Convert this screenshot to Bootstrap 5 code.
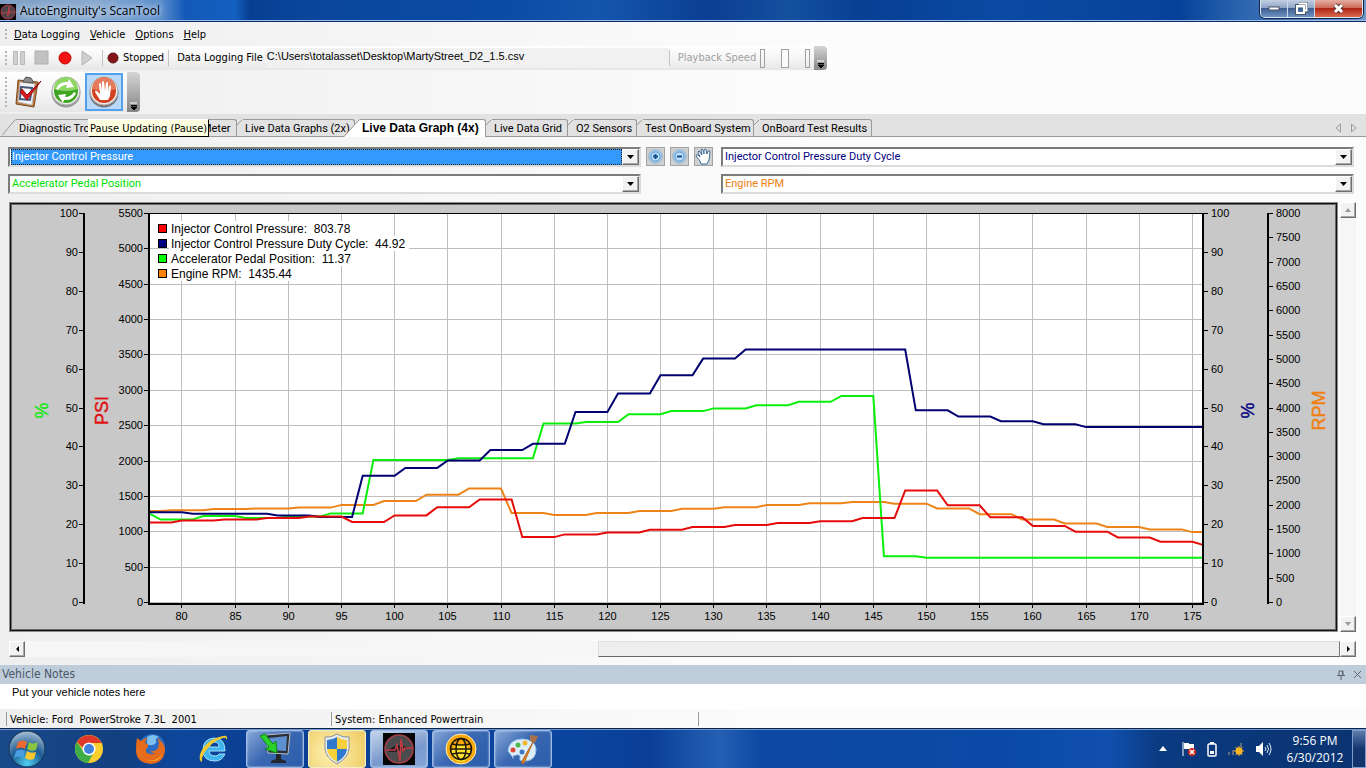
<!DOCTYPE html>
<html lang="en">
<head>
<meta charset="utf-8">
<meta name="viewport" content="width=device-width, initial-scale=1">
<title>AutoEnginuity's ScanTool</title>
<link rel="stylesheet" href="https://cdn.jsdelivr.net/npm/bootstrap@5.3.0/dist/css/bootstrap.min.css">
<style>
  :root { --ui: "DejaVu Sans Condensed", "Noto Sans", sans-serif; --sans: "Liberation Sans", Arial, sans-serif; --narrow: Roboto, "Liberation Sans", sans-serif; --segoe: "Open Sans", "Noto Sans", sans-serif; }
  body { font: 11px/16px var(--ui); color: #000; background: linear-gradient(90deg, #efefef, #fcfcfc 60%); }
  button { font: inherit; color: inherit; padding: 0; border: 0; background: none; }
  svg { display: block; flex: none; }

  /* window caption */
  .caption { height: 22px; background: linear-gradient(90deg, #7f9fc4 0, #89a9d0 100px, #5d8fce 160px, #1459b8 185px, #1260c0 235px, #083f92 250px, #0a479c 320px, #0a4ba6 500px, #1455ad 600px, #0b3f92 710px, #15509f 790px, #083f93 860px, #0a4aa4 1000px, #07429a 1180px, #2a64ae 1240px, #6f97c8 100%); border-bottom: 1px solid #0b2a66; box-shadow: inset 0 -1px #9dbce6; font: 12px/21px var(--segoe); }
  .caption h1 { font: inherit; text-shadow: 0 0 6px #d5e4f6, 0 0 6px #d5e4f6; }
  .wbtns { height: 18px; margin-right: 3px; border: 1px solid #dbe6f4; border-top: 0; border-radius: 0 0 5px 5px; overflow: hidden; box-shadow: 0 0 0 1px #12264c; }
  .wbtns button { width: 27px; background: linear-gradient(#c3d0e3, #8fa5c6 45%, #3f5f92 50%, #6d92c4); border-right: 1px solid #c9d7ea; display: grid; place-items: center; }
  .wbtns .x-close { width: 47px; border: 0; background: linear-gradient(#e5b0a4, #cd6b5a 45%, #b02416 50%, #d96c4e); }

  /* menu and tool bars */
  .menus { height: 24px; padding-top: 1px; }
  .menus .grip { height: 12px; margin-right: 7px; }
  .menus button { margin-right: 10px; }
  .grip { width: 2px; margin-left: 5px; background: repeating-linear-gradient(#b5b5b5 0 2px, transparent 2px 4px); }
  .strip { background: linear-gradient(#fff, #f3f3f3 60%, #e6e6e6); border-radius: 0 3px 3px 0; width: max-content; }
  .bar-a { height: 24px; }
  .bar-a .grip { height: 15px; margin-right: 5px; }
  .bar-a .ctl { gap: 8px; }
  .sep { width: 1px; height: 16px; background: #c3c3c3; }
  .file-box { height: 20px; width: 402px; background: #f1f1f1; font: 11px/16px var(--sans); }
  .more { width: 13px; align-self: stretch; background: linear-gradient(#d5d5d5, #858585); border-radius: 0 4px 4px 0; display: flex; align-items: end; justify-content: center; padding-bottom: 2px; }
  .bar-b { height: 40px; margin: 2px 0; }
  .bar-b .grip { height: 31px; margin-right: 2px; }
  .tool { width: 38px; height: 38px; display: grid; place-items: center; }
  .tool.hot { border: 2px solid #55a0ea; background: #b9d9f8; }
  .stopend { width: 5px; height: 19px; border: 1px solid #a0a0a0; }
  .speed { appearance: none; width: 40px; height: 19px; background: none; margin: 0; }
  .speed::-webkit-slider-thumb { appearance: none; width: 8px; height: 19px; border: 1px solid #a0a0a0; background: #fafafa; }
  .tip { position: absolute; left: 3px; top: 46px; z-index: 5; height: 18px; padding: 0 1px; line-height: 17px; background: #ffffe1; border: 1px solid #fff; border-right-color: #000; border-bottom-color: #000; white-space: nowrap; min-width: 121px; }

  /* tabs */
  .tabstrip { height: 23px; background: #e2e2e2; border-bottom: 1px solid #9a9a9a; font-family: var(--narrow); padding: 5px 0 0 2px; }
  .tabstrip button.tb { height: 17px; display: flex; white-space: nowrap; line-height: 18px; }
  .tb .face { border-top: 1px solid #9a9a9a; border-right: 1px solid #9a9a9a; border-radius: 0 3px 0 0; padding: 0 0 0 2px; flex: 1; height: 17px; line-height: 17px; text-align: left; }
  .tb.on { position: relative; z-index: 2; margin-left: -11px; font: 700 12px var(--sans); }
  .tb.on .face { background: #fff; height: 18px; padding-left: 1px; line-height: 17px; }
  .w-t1 { width: 144px; } .w-t2 { width: 91px; } .w-t3 { width: 118px; } .w-t4 { width: 142px; } .w-t5 { width: 82px; } .w-t6 { width: 69px; } .w-t7 { width: 117px; } .w-t8 { width: 118px; }

  /* parameter pickers */
  .rows { display: flex; flex-direction: column; gap: 7px; padding: 10px 4px 8px 0; }
  .pick { border: 2px solid; border-color: #7c7c7c #dcdcdc #dcdcdc #7c7c7c; background: #fff; height: 20px; flex: 1; display: flex; font: 11px/16px var(--narrow); }
  .pick select { appearance: none; border: 0; padding: 0 0 0 2px; flex: 1; min-width: 0; height: 16px; background: #fff; color: inherit; outline: 0; }
  .pick.sel select { background: #39f; color: #fff; border: 1px dotted #222; line-height: 14px; padding: 0; margin-left: 1px; }
  .raised { width: 17px; flex: none; display: grid; place-items: center; background: #f2f2f2; border: 1px solid; border-color: #fff #6e6e6e #6e6e6e #fff; box-shadow: inset -1px -1px #a8a8a8; }
  .sq { width: 19px; height: 19px; background: #d0d0d0; border: 1px solid #a2a2a2; display: grid; place-items: center; }
  .midgap { width: 80px; flex: none; gap: 5px; padding-left: 5px; }

  /* chart */
  .chartbox { flex: 1; min-width: 0; background: #c8c8c8; border: 1px solid #8c8c8c; box-shadow: inset 0 0 0 1px #111, inset 0 0 0 2px #6a6a6a; }
  .chartbox svg { width: 100%; height: 100%; font: 11px var(--sans); }
  .chartarea { flex: 1; min-height: 320px; gap: 2px; margin: 0 2px 0 1px; }
  .vs { width: 16px; background: #f6f6f6; }
  .vs .raised, .hs .raised { width: 16px; height: 16px; }
  .hs { height: 16px; background: #f6f6f6; margin: 9px 2px 0 1px; }
  .thumb { background: #eee; border: 1px solid; border-color: #e0e0e0 #777 #666 #e0e0e0; }

  /* notes and status */
  .notehead { height: 19px; background: #bfccda; color: #4a5a68; font: 12px/19px var(--ui); padding-left: 2px; }
  .notehead h2 { font: inherit; }
  .notes { height: 25px; border: 0; resize: none; padding: 0 12px; font: 11px/16px var(--sans); overflow: hidden; display: block; outline: 0; }
  .status { height: 19px; padding-left: 6px; }
  .status span { border-left: 1px solid #9a9a9a; height: 14px; padding-left: 3px; line-height: 16px; white-space: pre; }
  .status .stat-a { width: 325px; }
  .status .stat-b { width: 367px; }

  /* taskbar */
  .dock { height: 40px; background: linear-gradient(90deg, #1a4a8c 0, #123f80 120px, #0e479c 180px, #0a3f92 260px, #0b45a0 560px, #0a3f97 650px, #2560b4 720px, #0d48a3 760px, #0a4aa6 1000px, #104fae 1110px, #0a3a80 1160px, #0a3370 100%); border-top: 1px solid #0c2247; box-shadow: inset 0 1px #6f99d0; color: #fff; }
  .dock .pin { width: 62px; height: 38px; display: grid; place-items: center; }
  .dock .orb { width: 58px; padding-right: 4px; }
  .dock .runs { gap: 4px; margin-left: 2px; }
  .dock .run { width: 58px; height: 38px; border: 1px solid #9dbbe4; border-radius: 3px; background: linear-gradient(135deg, #89a9d8, #3a68b2 45%, #2c5ba8); display: grid; place-items: center; box-shadow: inset 0 0 2px #cfe0f5; }
  .dock .run.gold { background: radial-gradient(circle at 40% 60%, #fff2b8, #edc95a); border-color: #fbeeb4; }
  .dock .run.cur { background: linear-gradient(160deg, #c5d4ea, #7798cc 60%, #86a6d6); }
  .tray { gap: 10px; }
  .tray svg { margin: auto; }
  .clock { font: 12px/17px var(--segoe); text-align: center; width: 66px; }
  .peek { width: 14px; height: 38px; border: 1px solid #7f9cc8; background: linear-gradient(#5c7cab, #12356e 50%); }
</style>
</head>
<body class="d-flex flex-column min-vh-100">

<header class="caption d-flex align-items-start">
  <svg class="mt-1" width="16" height="16" viewBox="0 0 32 32"><rect width="32" height="32" fill="#080808"/><circle cx="16" cy="16" r="14" fill="#4a4346" stroke="#b03a42" stroke-width="2"/><path d="M3 18h7l3-4 3 11 2-20 2 15 2-4h7" fill="none" stroke="#b8404a" stroke-width="2"/></svg>
  <h1 class="m-0 ps-1 flex-grow-1">AutoEnginuity's ScanTool</h1>
  <div class="wbtns d-flex">
    <button aria-label="Minimize"><svg width="12" height="5"><rect x="1" y="1" width="10" height="3" fill="#fff" stroke="#4a5566"/></svg></button>
    <button aria-label="Restore"><svg width="13" height="13"><path d="M4 1h8v8h-2M1.500 3.500h8v8h-8z" fill="none" stroke="#4a5566" stroke-width="3"/><path d="M4 1.500h7.500v7H10M2 4h7v7H2z" fill="none" stroke="#fff" stroke-width="2"/></svg></button>
    <button class="x-close" aria-label="Close"><svg width="13" height="11"><path d="M3 2l7 7M10 2L3 9" stroke="#5c3434" stroke-width="5"/><path d="M3 2l7 7M10 2L3 9" stroke="#fff" stroke-width="3"/></svg></button>
  </div>
</header>

<nav class="menus d-flex align-items-center">
  <i class="grip"></i>
  <button><u>D</u>ata Logging</button><button><u>V</u>ehicle</button><button><u>O</u>ptions</button><button><u>H</u>elp</button>
</nav>

<div class="strip bar-a d-flex align-items-center">
  <i class="grip"></i>
  <div class="ctl d-flex me-2">
    <button aria-label="Pause"><svg width="14" height="16"><path d="M1.500 1.500h4v13h-4zM8.500 1.500h4v13h-4z" fill="#cfcfcf" stroke="#b9b9b9"/></svg></button>
    <button aria-label="Stop"><svg width="15" height="16"><rect x="1" y="1" width="13" height="13" fill="#c2c2c2" stroke="#b0b0b0"/></svg></button>
    <button aria-label="Record"><svg width="15" height="16"><circle cx="8" cy="8" r="6" fill="#f21212" stroke="#c40808"/></svg></button>
    <button aria-label="Play"><svg width="14" height="16"><path d="M2 1l10 7-10 7z" fill="#cfcfcf" stroke="#b4b4b4"/></svg></button>
  </div>
  <i class="sep"></i>
  <svg class="ms-1 me-1" width="12" height="12"><circle cx="6" cy="6" r="5" fill="#84161a" stroke="#5d1414"/></svg>
  <span>Stopped</span><i class="sep ms-1 me-2"></i><label for="logfile">Data Logging File</label>
  <output class="file-box ms-1" id="logfile">C:\Users\totalasset\Desktop\MartyStreet_D2_1.5.csv</output>
  <i class="sep me-2"></i><label for="speed" style="color:#a0a0a0">Playback Speed</label>
  <i class="stopend ms-1"></i><input class="speed" type="range" id="speed"><i class="stopend me-1"></i>
  <button class="more" aria-label="Toolbar options"><svg width="7" height="8"><path d="M0 1h7" stroke="#fff"/><path d="M1 3.500h6M1 5h6L4 8z" stroke="#000"/></svg></button>
</div>

<div class="strip bar-b d-flex align-items-center">
  <i class="grip"></i>
  <button class="tool" aria-label="Checklist"><svg width="32" height="34" viewBox="0 0 32 34"><path d="M6 5l20 2-4 25-18-3z" fill="#b9783c" stroke="#7c4a1e"/><path d="M8 7l15 2-3 21-14-3z" fill="#f4f4f8" stroke="#bbb"/><path d="M11 6l3-4 5 1 3 5-11-1z" fill="#8c8c8c" stroke="#555"/><path d="M9 12l11 1-2 12-10-1z" fill="#fff" stroke="#46587c" stroke-width="2"/><path d="M10 14l5 6L29 6 15 25 8 17z" fill="#d8181e" stroke="#9c0e12"/></svg></button>
  <button class="tool" aria-label="Update"><svg width="32" height="32" viewBox="0 0 32 32"><circle cx="16" cy="17" r="14.500" fill="#9a9a9a"/><circle cx="16" cy="15" r="14" fill="#eee" stroke="#aaa"/><circle cx="16" cy="15" r="12" fill="#3fa520"/><path d="M4 13a12 12 0 0 1 24 0q-12 4-24 0z" fill="#8ed662"/><path d="M6 13Q9 5 18 6l1-3 5 8-8 1 1-3q-6 0-9 5zM26 17q-3 8-12 7l-1 3-5-8 8-1-1 3q6 0 9-5z" fill="#fff"/></svg></button>
  <div class="position-relative">
    <button class="tool hot" aria-label="Pause updating" aria-describedby="tip"><svg width="32" height="32" viewBox="0 0 32 32"><circle cx="16" cy="17" r="14.500" fill="#777"/><circle cx="16" cy="15" r="14" fill="#eee" stroke="#aaa"/><circle cx="16" cy="15" r="12" fill="#d2401f"/><path d="M4 13a12 12 0 0 1 24 0q-12 4-24 0z" fill="#e57a5c"/><path d="M12 24l-5-8q0-2 2-1l3 3-1-10q1-2 2 0l1 7V6q1-2 2 0l1 9 1-8q2-2 2 0v9l1-6q2-1 2 0l-1 10-2 4z" fill="#fff"/></svg></button>
    <div class="tip" id="tip" role="tooltip">Pause Updating (Pause)</div>
  </div>
  <button class="more ms-1" aria-label="Toolbar options"><svg width="7" height="8"><path d="M0 1h7" stroke="#fff"/><path d="M1 3.500h6M1 5h6L4 8z" stroke="#000"/></svg></button>
</div>

<div class="tabstrip d-flex">
  <div class="d-flex flex-grow-1" role="tablist">
    <button class="tb w-t1" role="tab"><svg width="15" height="17"><path d="M0 16.500L12 2q2-2 3-1.500" fill="none" stroke="#9a9a9a"/></svg><span class="face">Diagnostic Trouble Codes</span></button>
    <button class="tb w-t2" role="tab"><svg width="6" height="17"><path d="M0 6L5 1" stroke="#9a9a9a"/></svg><span class="face">Live Data Meter</span></button>
    <button class="tb w-t3" role="tab"><svg width="6" height="17"><path d="M0 6L5 1" stroke="#9a9a9a"/></svg><span class="face">Live Data Graphs (2x)</span></button>
    <button class="tb on w-t4" role="tab" aria-selected="true"><svg width="17" height="18"><path d="M0 18L14 2q2-2 3-1.500V18z" fill="#fff"/><path d="M0 17.500L14 2q2-2 3-1.500" fill="none" stroke="#9a9a9a"/></svg><span class="face">Live Data Graph (4x)</span></button>
    <button class="tb w-t5" role="tab"><svg width="6" height="17"><path d="M0 6L5 1" stroke="#9a9a9a"/></svg><span class="face">Live Data Grid</span></button>
    <button class="tb w-t6" role="tab"><svg width="6" height="17"><path d="M0 6L5 1" stroke="#9a9a9a"/></svg><span class="face">O2 Sensors</span></button>
    <button class="tb w-t7" role="tab"><svg width="6" height="17"><path d="M0 6L5 1" stroke="#9a9a9a"/></svg><span class="face">Test OnBoard System</span></button>
    <button class="tb w-t8" role="tab"><svg width="6" height="17"><path d="M0 6L5 1" stroke="#9a9a9a"/></svg><span class="face">OnBoard Test Results</span></button>
  </div>
  <button class="me-2" aria-label="Previous tabs"><svg width="8" height="12"><path d="M6.500 2v8L2 6z" fill="none" stroke="#9a9a9a"/></svg></button>
  <button class="me-2" aria-label="Next tabs"><svg width="8" height="12"><path d="M1.500 2v8L6 6z" fill="none" stroke="#9a9a9a"/></svg></button>
</div>

<main class="flex-grow-1 d-flex flex-column px-2 pb-2">
  <div class="rows">
    <div class="d-flex">
      <div class="pick sel"><select aria-label="Graph 1"><option>Injector Control Pressure</option></select><span class="raised"><svg width="7" height="4"><path d="M0 0h7L3.500 4z"/></svg></span></div>
      <div class="midgap d-flex">
        <button class="sq" aria-label="Zoom in"><svg width="15" height="15"><circle cx="7.500" cy="7.500" r="7" fill="#9cc4e6" stroke="#a8b8c8"/><circle cx="7.500" cy="7.500" r="4.500" fill="#bfe0fa" stroke="#5c9ad0"/><path d="M5 7.500h5M7.500 5v5" stroke="#124a8c" stroke-width="2"/></svg></button>
        <button class="sq" aria-label="Zoom out"><svg width="15" height="15"><circle cx="7.500" cy="7.500" r="7" fill="#9cc4e6" stroke="#a8b8c8"/><circle cx="7.500" cy="7.500" r="4.500" fill="#bfe0fa" stroke="#5c9ad0"/><path d="M5 7.500h5" stroke="#124a8c" stroke-width="2"/></svg></button>
        <button class="sq" aria-label="Pan"><svg width="17" height="17"><path d="M6 16l-1-3-4-5q0-2 2-1l2 2-2-5q1-2 2 0l2 3-1-5q1-2 2 0l1 4V2q2-2 2 0l1 4 1-3q2-1 2 1l-1 8-2 4z" fill="#fff" stroke="#3f6c96"/></svg></button>
      </div>
      <div class="pick" style="color:#000080"><select aria-label="Graph 2"><option>Injector Control Pressure Duty Cycle</option></select><span class="raised"><svg width="7" height="4"><path d="M0 0h7L3.500 4z" fill="#000"/></svg></span></div>
    </div>
    <div class="d-flex">
      <div class="pick" style="color:#00e000"><select aria-label="Graph 3"><option>Accelerator Pedal Position</option></select><span class="raised"><svg width="7" height="4"><path d="M0 0h7L3.500 4z" fill="#000"/></svg></span></div>
      <div class="midgap"></div>
      <div class="pick" style="color:#f08010"><select aria-label="Graph 4"><option>Engine RPM</option></select><span class="raised"><svg width="7" height="4"><path d="M0 0h7L3.500 4z" fill="#000"/></svg></span></div>
    </div>
  </div>

  <div class="chartarea d-flex">
    <div class="chartbox" id="chart"></div>
    <div class="vs d-flex flex-column justify-content-between">
      <button class="raised" aria-label="Scroll up"><svg width="6" height="4"><path d="M0 4h6L3 0z" fill="#999"/></svg></button>
      <button class="raised" aria-label="Scroll down"><svg width="6" height="4"><path d="M0 0h6L3 4z" fill="#999"/></svg></button>
    </div>
  </div>
  <div class="hs d-flex">
    <button class="raised" aria-label="Scroll left"><svg width="3" height="6"><path d="M3 0v6L0 3z"/></svg></button>
    <div class="flex-grow-1 d-flex justify-content-end"><div class="thumb" style="width:56.4%"></div></div>
    <button class="raised" aria-label="Scroll right"><svg width="3" height="6"><path d="M0 0v6l3-3z"/></svg></button>
  </div>
</main>

<section>
  <div class="notehead d-flex align-items-center">
    <h2 class="m-0 flex-grow-1">Vehicle Notes</h2>
    <button class="me-2" aria-label="Pin"><svg width="8" height="10"><path d="M2 5V1h4v4M5.500 1v4M0 5.500h8M4 6v4" fill="none" stroke="#5a6672"/></svg></button>
    <button class="me-1" aria-label="Close notes"><svg width="9" height="9"><path d="M1 1l7 7M8 1L1 8" stroke="#5a6672"/></svg></button>
  </div>
  <textarea class="notes w-100" aria-label="Vehicle notes">Put your vehicle notes here</textarea>
  <div class="status d-flex align-items-center">
    <span class="stat-a">Vehicle: Ford  PowerStroke 7.3L  2001</span><span class="stat-b">System: Enhanced Powertrain</span><span></span>
  </div>
</section>

<footer class="dock d-flex align-items-center">
  <button class="pin orb" aria-label="Start"><svg width="38" height="38" viewBox="0 0 38 38"><defs><radialGradient id="orb" cx=".5" cy=".9" r=".9"><stop offset="0" stop-color="#4fd0f0"/><stop offset=".5" stop-color="#1c5b94"/><stop offset="1" stop-color="#a8c0d4"/></radialGradient></defs><circle cx="19" cy="19" r="18" fill="url(#orb)" stroke="#15304f"/><path d="M10 12q5-3 9 0l-2 7q-4-3-9 0z" fill="#ee6a30"/><path d="M21 12q4 3 9 0l-2 8q-5 2-9-1z" fill="#8cc63e"/><path d="M8 21q5-3 9 0l-2 7q-4-3-9 0z" fill="#4a9de0"/><path d="M19 21q4 3 9 1l-2 7q-5 2-9-1z" fill="#fcc62c"/></svg></button>
  <button class="pin" aria-label="Chrome"><svg width="30" height="30" viewBox="0 0 30 30"><circle cx="15" cy="15" r="14" fill="#fbd02e"/><path d="M2.900 8A14 14 0 0 1 27.500 9H15a6 6 0 0 0-6 5z" fill="#e0392c"/><path d="M2.900 8A14 14 0 0 0 14 29l5-9a6 6 0 0 1-9-2z" fill="#3fae49"/><circle cx="15" cy="15" r="6.500" fill="#fff"/><circle cx="15" cy="15" r="5" fill="#3f83dd"/></svg></button>
  <button class="pin" aria-label="Firefox"><svg width="32" height="32" viewBox="0 0 32 32"><circle cx="17" cy="14" r="13" fill="#2b6cc4"/><path d="M12 4q6-4 12 0-4 1-3 4t-4 4-5-3z" fill="#7cc0f0"/><path d="M2 5l4 3q3-3 7-3-3 2-3 5 4 1 3 4-3 2-2 5 5 4 9 1-4 0-5-2 5 1 8-3 2-6-1-10 8 5 8 12-1 13-14 14Q1 30 1 17q0-7 1-12z" fill="#e66a1c"/><path d="M3 12q0 12 9 15 10 2 15-6-2 8-12 7Q4 26 3 12z" fill="#f9a92c"/></svg></button>
  <button class="pin" aria-label="Internet Explorer"><svg width="34" height="34" viewBox="0 0 34 34"><path d="M29 19H13q1 5 6 5 3 0 4-2h6q-3 7-10 7-12 0-12-11T18 6q11 0 11 13zM13 15h10q0-5-5-5t-5 5z" fill="#3fb4ee" stroke="#a5e0fa"/><path d="M5 30Q1 24 8 15T27 4q5-1 4 4-1-3-4-2-8 2-15 10T6 29z" fill="#f5c92e"/></svg></button>
  <div class="runs d-flex">
    <button class="run" aria-label="Remote desktop"><svg width="34" height="34" viewBox="0 0 34 34"><path d="M8 3l24-2-2 21-20-1z" fill="#2c3038" stroke="#b8c0c8"/><path d="M11 6l18-2-1 15-16-1z" fill="#5f8fd0"/><path d="M18 22h5v5l5 2v2H13v-2l5-2z" fill="#23272c"/><path d="M2 4l5-2 8 10 3-3 1 12-12-4 4-2z" fill="#2bd02b" stroke="#0d8a12"/></svg></button>
    <button class="run gold" aria-label="User Account Control"><svg width="28" height="32" viewBox="0 0 28 32"><path d="M14 1q6 4 12 3v12q-1 9-12 15Q3 25 2 16V4q6 1 12-3z" fill="#e8edf2" stroke="#8a8f98"/><path d="M14 4v12H4V7q5 0 10-3z" fill="#2f78cc"/><path d="M14 4v12h10V7q-5 0-10-3z" fill="#f7d03a"/><path d="M4 16h10v13q-9-5-10-13z" fill="#f7d03a"/><path d="M24 16H14v13q9-5 10-13z" fill="#2f78cc"/></svg></button>
    <button class="run cur" aria-label="ScanTool"><svg width="32" height="32" viewBox="0 0 32 32"><rect width="32" height="32" fill="#060606"/><circle cx="16" cy="16" r="14" fill="#4b4b4d" stroke="#a5404a" stroke-width="1.500"/><path d="M4 18q10-10 24-2-8-2-12 2-6 2-12 0z" fill="#1c1c1e"/><path d="M3 17h9l2-5 3 16 1-22 2 12 2-3h7" fill="none" stroke="#c23a44" stroke-width="1.500"/></svg></button>
    <button class="run" aria-label="Network browser"><svg width="32" height="32" viewBox="0 0 32 32"><circle cx="16" cy="16" r="15" fill="#f8a80c" stroke="#fff0b0"/><circle cx="16" cy="20" r="9" fill="#ffe030"/><g fill="none" stroke="#1c1806" stroke-width="1.500"><circle cx="16" cy="16" r="10.500"/><ellipse cx="16" cy="16" rx="5" ry="10.500"/><path d="M7 11q9 2 18 0M7 21q9-2 18 0M5.500 16h21"/></g></svg></button>
    <button class="run" aria-label="Paint"><svg width="34" height="32" viewBox="0 0 34 32"><path d="M2 18Q3 6 17 6q12 1 13 10 0 11-10 12-7 1-6-3t-4-3-3 3-5-7z" fill="#dceefa" stroke="#9cc4e4"/><circle cx="7" cy="17" r="2.500" fill="#e0453a"/><circle cx="12" cy="12" r="2.500" fill="#4fb848"/><circle cx="19" cy="10" r="2.500" fill="#f2b52e"/><circle cx="16" cy="19" r="2.500" fill="#3e78c4"/><path d="M27 9L18 30l-2 1 0-3z" fill="#e08a34" stroke="#b5651c"/><path d="M24 2l8 1-3 7-5-2z" fill="#a8714a"/></svg></button>
  </div>
  <div class="ms-auto d-flex align-items-center tray">
    <button class="me-1" aria-label="Show hidden icons"><svg width="8" height="5"><path d="M0 5h8L4 0z" fill="#fff"/></svg></button>
    <svg width="16" height="16"><path d="M2 1v14" stroke="#fff" stroke-width="1"/><path d="M3 2h5v1h5v6H8V8H3z" fill="#fff"/><circle cx="11" cy="11" r="4" fill="#d42a20"/><path d="M9 9l4 4M13 9l-4 4" stroke="#fff" stroke-width="1.500"/></svg>
    <svg width="10" height="16"><rect x="1" y="3" width="8" height="12" rx="1" fill="none" stroke="#fff" stroke-width="1.500"/><path d="M3 1h4v2H3zM3 10h4v3H3z" fill="#fff"/></svg>
    <svg width="18" height="16" viewBox="0 0 18 16"><path d="M1 11h2v3H1zM5 9h2v5H5zM9 6h2v8H9zM13 2h2v12h-2z" fill="#5e6b80"/><circle cx="12" cy="10" r="3.500" fill="#f7b41e"/><path d="M12 5v10M7 10h10M8.500 6.500l7 7M15.500 6.500l-7 7" stroke="#f7b41e"/></svg>
    <svg width="17" height="16" viewBox="0 0 17 16"><path d="M1 5h3l4-4v14l-4-4H1z" fill="#fff"/><path d="M10 6q2 2 0 4M12 4q3 4 0 8M14 2q4 6 0 12" fill="none" stroke="#dfe8f4"/></svg>
    <div class="d-flex align-items-center"><time class="clock me-1">9:56 PM<br>6/30/2012</time>
    <button class="peek" aria-label="Show desktop"></button></div>
  </div>
</footer>

<script src="https://cdn.jsdelivr.net/npm/bootstrap@5.3.0/dist/js/bootstrap.bundle.min.js"></script>
<script>
// Each series is a list of [sample, percent of full scale]; a level holds until the sample before the next one.
const FIRST = 77, LAST = 176;
const series = [
  {name: "Engine RPM", value: "1435.44", color: "#ff8000", line: "#ee8418", row: 3, pts: [[77,23.5],[79,23.7],[83,24],[87,24.2],[91,24.4],[95,25.1],[99,26.1],[103,27.7],[107,29.3],[111,23],[115,22.5],[119,23],[123,23.5],[127,24.1],[131,24.5],[135,25.1],[139,25.5],[143,25.8],[147,25.4],[151,24.2],[155,22.7],[159,21.3],[163,20.3],[167,19.4],[171,18.8],[175,18.1]]},
  {name: "Accelerator Pedal Position", value: "11.37", color: "#00ff00", line: "#0af00a", row: 2, pts: [[77,22.8],[78,21.3],[82,22.2],[86,21.7],[90,22.1],[94,22.9],[98,36.6],[106,37.1],[114,46],[118,46.4],[122,48.4],[126,49.2],[130,49.9],[134,50.7],[138,51.6],[142,53.1],[146,11.9],[150,11.5]]},
  {name: "Injector Control Pressure Duty Cycle", value: "44.92", color: "#000080", line: "#000070", row: 1, pts: [[77,23.2],[81,22.8],[89,22.4],[93,22],[97,32.6],[101,34.6],[105,36.5],[109,39.2],[113,40.8],[117,49],[121,53.7],[125,58.4],[129,62.7],[133,65],[149,49.4],[153,47.8],[157,46.6],[161,45.8],[165,45.1]]},
  {name: "Injector Control Pressure", value: "803.78", color: "#ff0000", line: "#e60a0a", row: 0, pts: [[77,20.6],[80,21.1],[84,21.3],[88,21.7],[92,22.1],[96,20.7],[100,22.4],[104,24.5],[108,26.5],[112,16.8],[116,17.5],[120,18],[124,18.7],[128,19.4],[132,19.9],[136,20.4],[140,20.9],[144,21.7],[148,28.8],[152,25],[156,21.9],[160,19.7],[164,18.2],[168,16.7],[172,15.6],[176,14.8]]}
];
const host = document.getElementById("chart");
const el = (parent, tag, attrs, text) => {
  const n = document.createElementNS("http://www.w3.org/2000/svg", tag);
  for (const k in attrs) n.setAttribute(k, attrs[k]);
  if (text !== undefined) n.textContent = text;
  parent.append(n);
  return n;
};
function draw() {
  host.replaceChildren();
  const W = host.clientWidth, H = host.clientHeight;
  const svg = el(host, "svg", {viewBox: `0 0 ${W} ${H}`, role: "img", "aria-label": "Live data graph"});
  const L = 139, R = W - 134, T = 10, B = H - 29;
  const x = s => L + 1 + (s - FIRST) / (LAST - FIRST) * (R - L - 1);
  const y = p => B - p / 100 * (B - T);
  const snap = v => Math.round(v) + .5;
  const rule = (x1, y1, x2, y2, c = "#000", w = 1) => el(svg, "path", {d: `M${x1} ${y1}L${x2} ${y2}`, stroke: c, "stroke-width": w});
  el(svg, "rect", {x: L, y: T, width: R - L, height: B - T + 1, fill: "#fff"});
  for (let s = 80; s <= 175; s += 5) {
    const sx = snap(x(s) - .5);
    rule(sx, T, sx, B, "#bebebe");
    rule(sx, B + 2, sx, B + 6);
    el(svg, "text", {x: sx, y: B + 18, "text-anchor": "middle"}, s);
  }
  for (let v = 0; v <= 5500; v += 500) rule(L, snap(y(v / 55)), R, snap(y(v / 55)), "#bebebe");
  for (const s of series) {
    const pts = [];
    s.pts.forEach(([a, p], i) => {
      const end = i + 1 < s.pts.length ? s.pts[i + 1][0] - 1 : LAST;
      pts.push([x(a), y(p) + .5]);
      if (end > a) pts.push([x(end), y(p) + .5]);
    });
    el(svg, "polyline", {points: pts.map(q => q.map(n => n.toFixed(1)).join()).join(" "), fill: "none", stroke: s.line, "stroke-width": 2});
  }
  rule(L - 2, T + .5, R, T + .5);
  rule(L, T, L, B + 2, "#000", 2);
  rule(R, T, R, B + 2, "#000", 2);
  rule(L - 1, B + 2, R + 1, B + 2, "#000", 2);
  const axis = (ax, side, max, step) => {
    rule(ax, T, ax, B + 2, "#000", 2);
    for (let v = 0; v <= max; v += step) {
      const ty = snap(y(v / max * 100));
      rule(ax, ty, ax + side * 5, ty);
      el(svg, "text", {x: ax + (side < 0 ? -6 : 8), y: ty + 3.5, "text-anchor": side < 0 ? "end" : "start"}, v);
    }
  };
  axis(74, -1, 100, 10); axis(L, -1, 5500, 500); axis(R, 1, 100, 10); axis(W - 69, 1, 8000, 500);
  const mid = (T + B) / 2 + 3;
  [[38, "%", "#14e814"], [98, "PSI", "#e01010"], [W - 83, "%", "#000080"], [W - 12, "RPM", "#f08010"]].forEach(([tx, t, c]) =>
    el(svg, "text", {transform: `translate(${tx} ${mid}) rotate(-90)`, "text-anchor": "middle", fill: c, stroke: c, "stroke-width": .4, "font-size": 18}, t));
  for (const s of series) {
    const ty = T + 11 + s.row * 15;
    const bg = el(svg, "rect", {x: 159, y: ty - 3, height: 15, fill: "#fff"});
    const t = el(svg, "text", {x: 161, y: ty + 9, "font-size": 12, style: "white-space:pre"}, `${s.name}:  ${s.value}`);
    bg.setAttribute("width", t.getComputedTextLength() + 6);
    el(svg, "rect", {x: 148.5, y: ty + .5, width: 8, height: 8, fill: s.color, stroke: "#000"});
  }
}
draw();
addEventListener("resize", draw);
</script>
</body>
</html>
